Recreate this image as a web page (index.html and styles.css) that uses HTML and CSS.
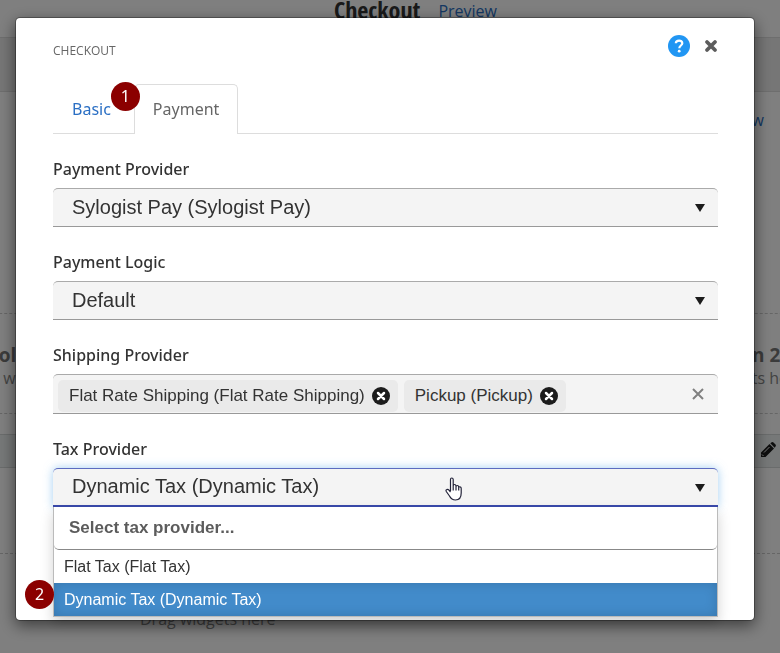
FILE: index.html
```html
<!DOCTYPE html>
<html lang="en">
<head>
<meta charset="utf-8">
<title>Checkout</title>
<link rel="stylesheet" href="styles.css">
</head>

<body>
<div class="page">
	<header class="page-head">
		<h1>Checkout</h1>
		<a href="#preview">Preview</a>
	</header>
	<div class="toolbar"></div>
	<div class="page-links"><a href="#view">View</a></div>
	<div class="columns">
		<div class="column">
			<h2>Column 1</h2>
			<p>Drag widgets here</p>
		</div>
		<div class="column">
			<h2>Column 2</h2>
			<p>Drag widgets here</p>
		</div>
	</div>
	<div class="widget-bar">
		<svg width="16" height="16" viewBox="0 0 16 16" aria-hidden="true">
			<path fill="#1c1c1c" d="M1 10.500 9.500 2 14 6.500 5.500 15H1ZM10.300 1.300 11.300.500Q12.500-.300 13.500.500L15.500 2.500Q16.300 3.500 15.500 4.500L14.700 5.700Z"/>
			<path fill="none" stroke="#eee" d="M4 10.500 9.500 5M2 12.500 3.500 14"/>
		</svg>
	</div>
	<div class="drop-line"></div>
	<p class="drop-text">Drag widgets here</p>
</div>

<div class="overlay">
	<div class="modal" role="dialog" aria-labelledby="modalTitle">
		<div class="modal-head">
			<h2 id="modalTitle">CHECKOUT</h2>
			<button type="button" class="icon-btn" aria-label="Help">
				<svg width="22" height="22" viewBox="0 0 22 22">
					<circle cx="11" cy="11" r="11" fill="#2196f3"/>
					<path d="M7.800 8.200C8 4.800 14.300 4.700 14.300 8.200c0 2.300-3 2.300-3 5" fill="none" stroke="#fff" stroke-width="2.200"/>
					<circle cx="11.200" cy="16.200" r="1.400" fill="#fff"/>
				</svg>
			</button>
			<button type="button" class="icon-btn" aria-label="Close">
				<svg width="14" height="14" viewBox="0 0 14 14">
					<path d="M3 3l8 8M11 3l-8 8" stroke="#5c5c5c" stroke-width="3.800" stroke-linecap="round"/>
				</svg>
			</button>
		</div>

		<ul class="tabs">
			<li><a href="#basic">Basic</a></li>
			<li class="active"><a href="#payment">Payment</a><span class="step step-1">1</span></li>
		</ul>

		<div class="field">
			<label for="paymentProvider">Payment Provider</label>
			<div class="select">
				<select id="paymentProvider">
					<option>Sylogist Pay (Sylogist Pay)</option>
				</select>
			</div>
		</div>

		<div class="field">
			<label for="paymentLogic">Payment Logic</label>
			<div class="select">
				<select id="paymentLogic">
					<option>Default</option>
				</select>
			</div>
		</div>

		<div class="field">
			<label for="shippingProvider">Shipping Provider</label>
			<div class="multi">
				<span class="chip">Flat Rate Shipping (Flat Rate Shipping)
					<button type="button" class="icon-btn" aria-label="Remove Flat Rate Shipping">
						<svg width="18" height="18" viewBox="0 0 18 18">
							<circle cx="9" cy="9" r="9" fill="#1c1c1c"/>
							<path d="M6 6l6 6M12 6l-6 6" stroke="#fff" stroke-width="2.500" stroke-linecap="round"/>
						</svg>
					</button>
				</span>
				<span class="chip">Pickup (Pickup)
					<button type="button" class="icon-btn" aria-label="Remove Pickup">
						<svg width="18" height="18" viewBox="0 0 18 18">
							<circle cx="9" cy="9" r="9" fill="#1c1c1c"/>
							<path d="M6 6l6 6M12 6l-6 6" stroke="#fff" stroke-width="2.500" stroke-linecap="round"/>
						</svg>
					</button>
				</span>
				<input type="text" id="shippingProvider">
				<button type="button" class="icon-btn clear" aria-label="Clear all">
					<svg width="12" height="12" viewBox="0 0 12 12">
						<path d="M1 1l10 10M11 1L1 11" stroke="#808080" stroke-width="2"/>
					</svg>
				</button>
			</div>
		</div>

		<div class="field open">
			<label for="taxProvider">Tax Provider</label>
			<div class="select">
				<select id="taxProvider">
					<option>Dynamic Tax (Dynamic Tax)</option>
				</select>
				<svg class="pointer" width="18" height="24" viewBox="0 0 18 24" aria-hidden="true">
					<path d="M5.500 14V2.500Q5.500 1 6.800 1T8.200 2.500V9Q8.200 7.500 9.500 7.500T11 9V9.800Q11 8.500 12.300 8.500T13.700 10V10.800Q13.700 9.500 15 9.800T16.200 11.500V16Q16.200 23 10.500 23 6.500 23 4.500 19L1.300 14.500Q.500 13 1.800 12.500 3 12 4 13.200L5.500 15M8.200 9V13.500M11 9.500V13.500M13.700 10.500V13.500" fill="#fff" stroke="#222238" stroke-width="1.200" stroke-linejoin="round"/>
				</svg>
			</div>
			<div class="menu">
				<input type="text" class="menu-search" placeholder="Select tax provider..." aria-label="Select tax provider">
				<ul>
					<li><button type="button">Flat Tax (Flat Tax)</button></li>
					<li><button type="button" class="selected">Dynamic Tax (Dynamic Tax)</button></li>
				</ul>
				<span class="step step-2">2</span>
			</div>
		</div>
	</div>
</div>
</body>
</html>
```
FILE: styles.css
```css
* {margin:0; padding:0; box-sizing:border-box;}
body {font-family:"Noto Sans", "Open Sans", sans-serif; font-size:16px; line-height:24px; color:#333; background:#fff;}
ul {list-style:none;}
a {color:#2a6fc4; text-decoration:none;}
svg {display:block;}
button, input, select {font-family:"Liberation Sans", Arial, sans-serif; color:#333;}

/* page behind the dialog */
.page {height:100vh; overflow:hidden; font-family:"Open Sans", sans-serif;}
.page-head {display:flex; justify-content:center; gap:18px; height:38px; padding-left:51px; border-bottom:1px solid #ddd;}
.page-head h1 {font:bold 24px/20px "Open Sans Condensed", "Roboto Condensed", Roboto, sans-serif;}
.page-head a {line-height:22px;}
.toolbar {height:54px; background:#ececec; border-bottom:1px solid #ddd;}
.page-links {height:221px; padding:16px 16px 0 0; text-align:right;}
.columns {display:grid; grid-template-columns:1fr 1fr; height:101px; margin:0 -308px 0 -321px; padding-top:28px; border-top:1px dashed #ccc; border-bottom:1px dashed #ccc; text-align:center; color:#888;}
.column h2 {font-size:19px; line-height:26px; color:#777;}
.column p {line-height:20px;}
.widget-bar {display:flex; justify-content:flex-end; align-items:center; height:34px; margin-top:20px; padding:0 4px 2px 0; background:#ecf0f0; border-top:1px solid #d4d8d8; border-bottom:1px solid #d4d8d8;}
.drop-line {height:86px; border-bottom:1px dashed #ccc;}
.drop-text {padding:53px 0 0 140px; color:#888;}

/* dialog */
.overlay {position:fixed; top:0; right:0; bottom:0; left:0; padding:17px 25px 0 15px; background:rgba(0,0,0,0.5);}
.modal {padding:16px 36px 3px 37px; background:#fff; background-clip:padding-box; border:1px solid rgba(0,0,0,0.3); border-radius:5px; box-shadow:0 5px 15px rgba(0,0,0,0.5);}
.modal-head {display:flex; align-items:center; gap:14px; height:24px;}
.modal-head h2 {flex:1; padding-top:10px; font:12px/18px "Open Sans", sans-serif; color:#666;}
.icon-btn {border:0; background:none; cursor:pointer;}

.tabs {display:flex; gap:4px; margin:26px 0 23px; border-bottom:1px solid #ddd;}
.tabs li {position:relative; margin-bottom:-1px;}
.tabs a {display:block; height:50px; padding:0 18px; border:1px solid transparent; border-bottom:0; border-radius:5px 5px 0 0; line-height:48px;}
.tabs .active a {color:#666; background:#fff; border-color:#ddd;}

.step {position:absolute; width:29px; height:29px; border-radius:50%; background:#8b0000; color:#fff; font-size:16px; line-height:29px; text-align:center;}
.step-1 {left:-23px; top:-2px;}
.step-2 {left:-29px; bottom:7px;}

.field {margin-bottom:23px;}
.field label {display:block; margin-bottom:7px; font-weight:500;}
.select {display:grid; align-items:center;}
.select select {grid-area:1/1; width:100%; height:39px; padding:0 19px 2px; border:0; border-top:1px solid #aaa; border-bottom:1px solid #999; border-radius:5px 5px 0 0; background:#f4f4f4; font-size:20px; appearance:none; outline:none;}
.select:after {content:""; grid-area:1/1; justify-self:end; margin:0 13px 0 0; border:5px solid transparent; border-top:8px solid #1c1c1c; border-bottom:0; pointer-events:none;}
.multi {display:flex; align-items:center; gap:6px; height:40px; padding:4px 14px 0 5px; border-top:1px solid #aaa; border-bottom:1px solid #999; border-radius:5px 5px 0 0; background:#f4f4f4;}
.chip {display:flex; align-items:center; gap:7px; height:32px; padding:0 8px 0 11px; border-radius:5px; background:#eaeaea; font:17px/32px "Liberation Sans", Arial, sans-serif; white-space:nowrap;}
.multi input {flex:1; min-width:0; border:0; background:none; font-size:17px; outline:none;}
.clear {padding-bottom:4px;}

.open {margin-bottom:0;}
.open .select {position:relative;}
.open select {border-top-color:#5c6bc0; border-bottom:2px solid #3949ab; box-shadow:0 0 10px rgba(102,175,233,0.6);}
.pointer {position:absolute; left:59%; top:9px;}
.menu {position:relative; border:1px solid #bbb; border-top:0; background:#fff; box-shadow:0 6px 12px rgba(0,0,0,0.18);}
.menu-search {display:block; width:100%; height:43px; padding:0 15px; border:0; border-bottom:1px solid #888; border-radius:0 0 5px 5px; background:#fff; font-size:17px; font-weight:bold; outline:none;}
.menu-search::placeholder {color:#5c5c5c;}
.menu li button {display:block; width:100%; height:33px; padding:0 10px; border:0; background:#fff; font-size:16px; text-align:left;}
.menu li .selected {color:#fff; background:#428bca; box-shadow:inset 0 0 12px rgba(0,0,0,0.15);}
```
